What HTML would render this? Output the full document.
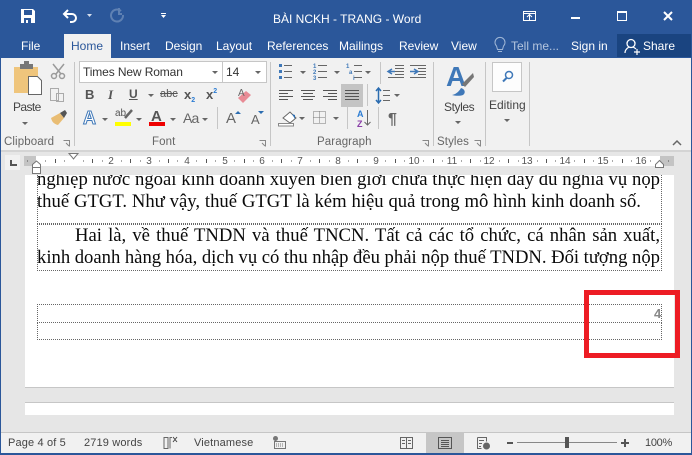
<!DOCTYPE html>
<html><head><meta charset="utf-8">
<style>
html,body{margin:0;padding:0}
body{width:692px;height:455px;overflow:hidden;position:relative;background:#e6e6e6;font-family:"Liberation Sans",sans-serif;font-size:12px;color:#444}
.a{position:absolute;white-space:nowrap}
.tab{position:absolute;top:39px;color:#fff;font-size:12px;line-height:14px;white-space:nowrap}
.sep{position:absolute;width:1px;background:#c6c6c6}
.doc{position:absolute;left:37px;width:623px;font-family:"Liberation Serif",serif;font-size:18.67px;color:#0a0a0a;line-height:18px;height:18px;text-align:justify;text-align-last:justify;white-space:nowrap}
.rn{position:absolute;top:156px;font-size:10px;line-height:11px;color:#555;width:12px;text-align:center}
.lbl{position:absolute;top:136px;font-size:11.5px;line-height:13px;color:#666;letter-spacing:.1px}
.dl{position:absolute;border:0 dotted #666}
.tri{position:absolute;width:0;height:0;border-left:3px solid transparent;border-right:3px solid transparent;border-top:3px solid #666}
svg{position:absolute;overflow:visible}
</style></head><body>

<!-- title bar -->
<div class="a" style="left:0;top:0;width:692px;height:58px;background:#2b579a"></div>
<div class="a" style="left:273px;top:12px;color:#fff;font-size:12px;line-height:14px">BÀI NCKH - TRANG - Word</div>
<svg style="left:0;top:0" width="692" height="58">
<path d="M21 9h12l2 2v12H21z" fill="#fff"/><rect x="24" y="10" width="8" height="5" fill="#2b579a"/><rect x="24" y="18" width="7" height="5" fill="#2b579a"/><rect x="26" y="20" width="2" height="3" fill="#fff"/>
<path d="M65 14h7a4 4 0 0 1 0 8h-2M68 10l-4 4 4 4" fill="none" stroke="#fff" stroke-width="2"/>
<path d="M87 14h5l-2.500 3z" fill="#d5deec"/>
<path d="M121 11a6 6 0 1 0 2 4M119 8v6h3" fill="none" stroke="#5f81b3" stroke-width="2"/>
<path d="M161 13h5v1h-5zM161 15h5l-2.500 3z" fill="#fff"/>
<rect x="523.500" y="11.500" width="12" height="9" fill="none" stroke="#fff"/><path d="M523.500 13.500h12" stroke="#fff"/><path d="M529.500 20v-5M527 17l2.500-2.500 2.500 2.500" fill="none" stroke="#fff"/>
<rect x="571" y="17" width="9" height="2" fill="#fff"/>
<rect x="617.500" y="11.500" width="9" height="9" fill="none" stroke="#fff"/><rect x="617" y="11" width="10" height="2" fill="#fff"/>
<path d="M664 12l8 8M672 12l-8 8" stroke="#fff" stroke-width="2"/>
<path d="M496.500 46a5 5 0 1 1 7 0l-1 3.500h-5z" fill="none" stroke="#9fb6d6"/><path d="M498 51.500h4" stroke="#9fb6d6"/>
</svg>
<div class="a" style="left:64px;top:34px;width:47px;height:24px;background:#f1f1f1"></div>
<div class="a" style="left:617px;top:34px;width:74px;height:23px;background:#1a4480"></div>
<div class="tab" style="left:21px">File</div>
<div class="tab" style="left:71px;color:#2b579a">Home</div>
<div class="tab" style="left:120px">Insert</div>
<div class="tab" style="left:165px">Design</div>
<div class="tab" style="left:216px">Layout</div>
<div class="tab" style="left:267px">References</div>
<div class="tab" style="left:339px">Mailings</div>
<div class="tab" style="left:399px">Review</div>
<div class="tab" style="left:451px">View</div>
<div class="tab" style="left:511px;color:#b4c5de">Tell me...</div>
<div class="tab" style="left:571px">Sign in</div>
<div class="tab" style="left:643px">Share</div>
<svg style="left:624px;top:38px" width="20" height="18"><circle cx="7" cy="5.500" r="4" fill="none" stroke="#fff" stroke-width="1.300"/><path d="M1 15c0-4 3-5 4-6M9 9c1 .5 2 1 3 2M10 14h6M13 11v6" fill="none" stroke="#fff" stroke-width="1.200"/></svg>

<!-- ribbon -->
<div class="a" style="left:1px;top:58px;width:690px;height:92px;background:#f1f1f1"></div>
<div class="a" style="left:0;top:150px;width:692px;height:2px;background:#d4d4d4"></div>
<div class="sep" style="left:74px;top:62px;height:84px"></div>
<div class="sep" style="left:270px;top:62px;height:84px"></div>
<div class="sep" style="left:433px;top:62px;height:84px"></div>
<div class="sep" style="left:485px;top:62px;height:84px"></div>
<div class="sep" style="left:529px;top:62px;height:84px"></div>
<div class="sep" style="left:217px;top:107px;height:22px"></div>
<div class="sep" style="left:380px;top:62px;height:22px"></div>
<div class="sep" style="left:367px;top:84px;height:22px"></div>
<div class="sep" style="left:347px;top:107px;height:22px"></div>
<div class="sep" style="left:378px;top:107px;height:22px"></div>

<svg style="left:0;top:58px" width="692" height="92">
<path d="M14 9h24v26H14z" fill="#efc57c"/><rect x="20" y="6" width="13" height="5" fill="#777"/><rect x="24" y="3" width="5" height="4" fill="#777"/>
<path d="M28.500 18.500h9l4 4v14h-13z" fill="#fff" stroke="#666"/>
<path d="M22 64h6l-3 3z" fill="#666"/>
<path d="M53 6l8 10M64 6l-8 10" stroke="#9a9a9a" stroke-width="1.500"/><circle cx="54" cy="18" r="2.500" fill="none" stroke="#9a9a9a" stroke-width="1.500"/><circle cx="62" cy="18" r="2.500" fill="none" stroke="#9a9a9a" stroke-width="1.500"/>
<path d="M50.500 30.500h8v12h-8zM56.500 35.500h7v8h-7z" fill="#f1f1f1" stroke="#aaa"/>
<path d="M51 60l9-5 4 5-6 7c-4-1-6-3-7-7z" fill="#e9bd74"/><path d="M60 55l5-3 2 3-3 5z" fill="#555"/>
<rect x="115" y="64" width="16" height="4" fill="#ffff00"/>
<rect x="149" y="64" width="16" height="4" fill="#ee0000"/>
</svg>

<!-- font boxes -->
<div class="a" style="left:79px;top:61px;width:142px;height:20px;background:#fff;border:1px solid #c6c6c6;font-size:12px;line-height:20px;color:#333;text-indent:3px;letter-spacing:-.12px">Times New Roman</div>
<div class="a" style="left:222px;top:61px;width:43px;height:20px;background:#fff;border:1px solid #c6c6c6;font-size:12px;line-height:20px;color:#333;text-indent:3px">14</div>
<div class="tri" style="left:212px;top:71px"></div>
<div class="tri" style="left:255px;top:71px"></div>

<div class="a" style="left:13px;top:100px;font-size:12px;color:#444;line-height:14px;letter-spacing:-.6px">Paste</div>
<div class="a" style="left:85px;top:87px;font:bold 13px 'Liberation Sans',sans-serif;color:#555">B</div>
<div class="a" style="left:108px;top:87px;font:italic bold 13px 'Liberation Serif',serif;color:#555">I</div>
<div class="a" style="left:129px;top:87px;font:bold 12px 'Liberation Sans',sans-serif;color:#555;text-decoration:underline">U</div>
<div class="tri" style="left:148px;top:94px"></div>
<div class="a" style="left:160px;top:88px;font-size:11px;color:#555;text-decoration:line-through">abc</div>
<div class="a" style="left:184px;top:87px;font:bold 13px 'Liberation Sans',sans-serif;color:#555">x<span style="font-size:7px;color:#2b7cd3;position:relative;top:3px">2</span></div>
<div class="a" style="left:206px;top:87px;font:bold 13px 'Liberation Sans',sans-serif;color:#555">x<span style="font-size:7px;color:#2b7cd3;position:relative;top:-6px">2</span></div>
<div class="a" style="left:83px;top:108px;font:bold 18px 'Liberation Sans',sans-serif;color:#fff;-webkit-text-stroke:1px #3f78b8">A</div>
<div class="tri" style="left:102px;top:118px"></div>
<div class="a" style="left:115px;top:108px;font-size:10px;color:#555">ab</div>
<svg style="left:122px;top:108px" width="12" height="12"><path d="M3 10l7-8" stroke="#666" stroke-width="2.500"/></svg>
<div class="tri" style="left:136px;top:118px"></div>
<div class="a" style="left:151px;top:108px;font:bold 15px 'Liberation Sans',sans-serif;color:#555">A</div>
<div class="tri" style="left:170px;top:118px"></div>
<div class="a" style="left:183px;top:110px;font-size:14px;color:#666;letter-spacing:-.8px">Aa</div>
<div class="tri" style="left:202px;top:118px"></div>
<div class="a" style="left:226px;top:110px;font-size:15px;color:#666">A</div>
<div class="a" style="left:251px;top:112px;font-size:13px;color:#666">A</div>
<svg style="left:0;top:0" width="692" height="150">
<path d="M235 114h6l-3-3zM258 111h6l-3 3z" fill="#2b6cb0"/>
<path d="M238 98l8-7 5 4-8 8z" fill="#e88b95"/>
<text x="238" y="96" font-size="10" fill="#666" font-family="Liberation Sans">A</text>
<g fill="#3f78b8"><rect x="279" y="64" width="3" height="3"/><rect x="279" y="70" width="3" height="3"/><rect x="279" y="76" width="3" height="3"/></g>
<path d="M284 65.500h8M284 71.500h8M284 77.500h8M318 65.500h9M318 71.500h9M318 77.500h9M354 65.500h8M354 71.500h8M354 77.500h8" stroke="#666"/>
<g fill="#3f78b8" font-size="6" font-family="Liberation Sans" font-weight="bold"><text x="313" y="68">1</text><text x="313" y="74">2</text><text x="313" y="80">3</text><text x="346" y="68">1</text><text x="349" y="74">a</text><text x="353" y="80">i</text></g>
<path d="M300 71h6l-3 3zM334 71h6l-3 3zM365 71h6l-3 3z" fill="#666"/>
<path d="M395 65.500h9M395 68.500h9M395 71.500h9M395 74.500h9M388 77.500h16M410 65.500h16M418 68.500h8M418 71.500h8M418 74.500h8M410 77.500h16" stroke="#666"/>
<path d="M388 71.500h7M392 69l-4 2.500 4 2.500M410 71.500h7M414 69l4 2.500-4 2.500" fill="none" stroke="#3f78b8" stroke-width="1.500"/>
<rect x="341" y="84" width="22" height="23" fill="#c4c4c4"/>
<path d="M279 90.500h14M279 93.500h9M279 96.500h14M279 99.500h9" stroke="#555"/>
<path d="M301 90.500h14M303 93.500h10M301 96.500h14M303 99.500h10" stroke="#555"/>
<path d="M323 90.500h14M328 93.500h9M323 96.500h14M328 99.500h9" stroke="#555"/>
<path d="M345 90.500h14M345 93.500h14M345 96.500h14M345 99.500h14" stroke="#555"/>
<path d="M378.500 88v15M376 91l2.500-3 2.500 3M376 100l2.500 3 2.500-3" fill="none" stroke="#2b6cb0" stroke-width="1.500"/>
<path d="M383 90.500h7M383 95.500h7M383 100.500h7" stroke="#666"/>
<path d="M394 94h6l-3 3z" fill="#666"/>
<path d="M283 118l7-6 6 6-6 5z" fill="#fff" stroke="#666"/><path d="M292 114l3 1 0 4z" fill="#2b6cb0"/><rect x="278.500" y="123.500" width="15" height="2.500" fill="#fff" stroke="#888"/>
<path d="M299 117h6l-3 3zM333 117h6l-3 3z" fill="#666"/>
<path d="M313.500 111.500h12v12h-12zM319.500 111.500v12M313.500 117.500h12" fill="none" stroke="#777" stroke-dasharray="1 1"/>
<text x="357" y="117" font-size="9" font-weight="bold" fill="#2b7cd3" font-family="Liberation Sans">A</text>
<text x="357" y="127" font-size="9" font-weight="bold" fill="#8a3fa8" font-family="Liberation Sans">Z</text>
<path d="M367.500 110v15M364.500 122l3 3 3-3" fill="none" stroke="#666"/>
<text x="388" y="124" font-size="16" font-weight="bold" fill="#666" font-family="Liberation Sans">¶</text>
<text x="446" y="86" font-size="28" font-weight="bold" fill="#3f78b8" font-family="Liberation Sans">A</text>
<path d="M462 84l11-11 1 4-9 10z" fill="#777"/><path d="M452 95c6-1 9-7 9-7 4 1 5 5 2 7-3 1-7 1-11 0z" fill="#3f78b8"/>
<path d="M455 121h6l-3 3zM504 119h6l-3 3z" fill="#666"/>
<rect x="492.500" y="62.500" width="29" height="29" fill="#fdfdfd" stroke="#c6c6c6"/>
<circle cx="509" cy="75" r="3.500" fill="none" stroke="#3f78b8" stroke-width="1.500"/><path d="M506.500 78l-3.500 3.500" stroke="#3f78b8" stroke-width="2"/>
<path d="M63.500 140.500h6v6M66 143l3 3" fill="none" stroke="#888"/>
<path d="M259.500 140.500h6v6M262 143l3 3" fill="none" stroke="#888"/>
<path d="M422.500 140.500h6v6M425 143l3 3" fill="none" stroke="#888"/>
<path d="M474.500 140.500h6v6M477 143l3 3" fill="none" stroke="#888"/>
<path d="M673 145l4-4 4 4" fill="none" stroke="#666" stroke-width="1.500"/>
</svg>
<div class="a" style="left:444px;top:100px;font-size:12px;color:#444;line-height:14px;letter-spacing:-.4px">Styles</div>
<div class="a" style="left:489px;top:98px;font-size:12px;color:#444;line-height:14px">Editing</div>
<div class="lbl" style="left:4px">Clipboard</div>
<div class="lbl" style="left:152px">Font</div>
<div class="lbl" style="left:317px">Paragraph</div>
<div class="lbl" style="left:437px">Styles</div>

<!-- ruler row -->
<div class="a" style="left:5px;top:155px;width:15px;height:15px;background:#f1f1f1"></div>
<svg style="left:5px;top:155px" width="15" height="15"><path d="M6 5v5h6" fill="none" stroke="#555" stroke-width="2"/></svg>
<div class="a" style="left:24px;top:156px;width:636px;height:10px;background:#fff"></div>
<div class="a" style="left:24px;top:156px;width:12px;height:10px;background:#c4c4c4"></div>
<div class="a" style="left:660px;top:156px;width:14px;height:10px;background:#c4c4c4"></div>
<div class="rn" style="left:105px">2</div><div class="rn" style="left:143px">3</div><div class="rn" style="left:181px">4</div><div class="rn" style="left:219px">5</div><div class="rn" style="left:256px">6</div><div class="rn" style="left:294px">7</div><div class="rn" style="left:332px">8</div><div class="rn" style="left:370px">9</div><div class="rn" style="left:408px">10</div><div class="rn" style="left:446px">11</div><div class="rn" style="left:483px">12</div><div class="rn" style="left:521px">13</div><div class="rn" style="left:559px">14</div><div class="rn" style="left:597px">15</div><div class="rn" style="left:635px">16</div>
<svg style="left:0;top:156px" width="692" height="10">
<path stroke="#555" d="M27 5h1M45 5h1M64 5h1M83 5h1M102 5h1M121 5h1M140 5h1M159 5h1M177 5h1M196 5h1M215 5h1M234 5h1M253 5h1M272 5h1M291 5h1M310 5h1M329 5h1M348 5h1M366 5h1M385 5h1M404 5h1M423 5h1M442 5h1M461 5h1M480 5h1M499 5h1M518 5h1M537 5h1M555 5h1M574 5h1M593 5h1M612 5h1M631 5h1M650 5h1M668 5h1"/>
<path stroke="#555" d="M55.500 3v4M92.500 3v4M130.500 3v4M168.500 3v4M206.500 3v4M244.500 3v4M281.500 3v4M319.500 3v4M357.500 3v4M395.500 3v4M433.500 3v4M470.500 3v4M508.500 3v4M546.500 3v4M584.500 3v4M622.500 3v4"/>
</svg>
<svg style="left:0;top:150px" width="692" height="26">
<path d="M69 3.500h9l-4.500 5.500zM32.500 17.500v-3l4-3.500 4 3.500v3zM32.500 17.500h8v6h-8z" fill="#fff" stroke="#777"/>
<path d="M655.500 17.500v-3l4-4 4 4v3z" fill="#fff" stroke="#777"/>
</svg>

<!-- document -->
<div class="a" style="left:25px;top:175px;width:649px;height:212px;background:#fff;overflow:hidden">
  <div class="doc" style="left:12px;top:-4px;word-spacing:-1.5px">nghiệp nước ngoài kinh doanh xuyên biên giới chưa thực hiện đầy đủ nghĩa vụ nộp</div>
  <div class="doc" style="left:12px;top:18px;text-align-last:left;word-spacing:.2px">thuế GTGT. Như vậy, thuế GTGT là kém hiệu quả trong mô hình kinh doanh số.</div>
  <div class="doc" style="left:50px;width:585px;top:52px">Hai là, về thuế TNDN và thuế TNCN. Tất cả các tổ chức, cá nhân sản xuất,</div>
  <div class="doc" style="left:12px;top:74px;word-spacing:-2px">kinh doanh hàng hóa, dịch vụ có thu nhập đều phải nộp thuế TNDN. Đối tượng nộp</div>
</div>
<div class="dl" style="left:37px;top:175px;width:623px;height:48px;border-width:0 1px 1px 1px"></div>
<div class="dl" style="left:37px;top:224px;width:623px;height:45px;border-width:1px"></div>
<div class="dl" style="left:37px;top:304px;width:623px;height:17px;border-width:1px"></div>
<div class="dl" style="left:37px;top:322px;width:623px;height:17px;border-width:1px;border-top-width:0"></div>
<div class="a" style="left:654px;top:306px;font-size:13px;line-height:15px;color:#888;font-weight:bold">4</div>
<div class="a" style="left:584px;top:290px;width:86px;height:58px;border:5px solid #ed1c24"></div>
<div class="a" style="left:25px;top:387px;width:649px;height:1px;background:#c6c6c6"></div>
<div class="a" style="left:25px;top:402px;width:649px;height:1px;background:#c6c6c6"></div>
<div class="a" style="left:25px;top:403px;width:649px;height:12px;background:#fff"></div>

<!-- status bar -->
<div class="a" style="left:1px;top:432px;width:690px;height:21px;background:#f1f1f1;border-top:1px solid #c6c6c6;box-sizing:border-box"></div>
<div class="a" style="left:426px;top:433px;width:38px;height:20px;background:#c6c6c6"></div>
<div class="a" style="left:8px;top:436px;font-size:11px;line-height:14px;color:#444;letter-spacing:.15px">Page 4 of 5</div>
<div class="a" style="left:84px;top:436px;font-size:11px;line-height:14px;color:#444;letter-spacing:.15px">2719 words</div>
<div class="a" style="left:194px;top:436px;font-size:11px;line-height:14px;color:#444;letter-spacing:.15px">Vietnamese</div>
<div class="a" style="left:645px;top:436px;font-size:11px;line-height:14px;color:#444;letter-spacing:-.3px">100%</div>
<svg style="left:0;top:432px" width="692" height="23">
<path d="M164 5.500h4v11h-4zM172 5.500h-2v11" fill="none" stroke="#666"/><path d="M173 5l4 5M177 5l-4 5" stroke="#444"/>
<circle cx="275.500" cy="6.500" r="2.500" fill="#777"/><rect x="274.500" y="9.500" width="11" height="7" fill="none" stroke="#777"/><path d="M276 12h8M276 14h8" stroke="#777" stroke-dasharray="1 1"/>
<path d="M400.500 5.500h12v11h-12zM406.500 5.500v11M402 8.500h3M402 11.500h3M408 8.500h3M408 11.500h3" fill="none" stroke="#666"/>
<path d="M438.500 5.500h13v11h-13z" fill="none" stroke="#555"/><path d="M441 8.500h8M441 10.500h8M441 12.500h8M441 14.500h8" stroke="#555"/>
<path d="M477.500 5.500h9v4M477.500 5.500v11h4M479 8.500h5M479 11.500h3M479 14.500h2" fill="none" stroke="#666"/><circle cx="486.500" cy="14" r="3.500" fill="#666"/>
<rect x="507" y="10" width="6" height="2" fill="#555"/>
<path d="M517 10.500h100" stroke="#888"/>
<rect x="565" y="5" width="4" height="11" fill="#555"/>
<path d="M621 11h8M625 7v8" stroke="#555" stroke-width="2"/>
</svg>
<div class="a" style="left:0;top:453px;width:692px;height:2px;background:#2b579a"></div>
<div class="a" style="left:0;top:0;width:1px;height:455px;background:#2b579a"></div>
<div class="a" style="left:691px;top:0;width:1px;height:455px;background:#2b579a"></div>
</body></html>
